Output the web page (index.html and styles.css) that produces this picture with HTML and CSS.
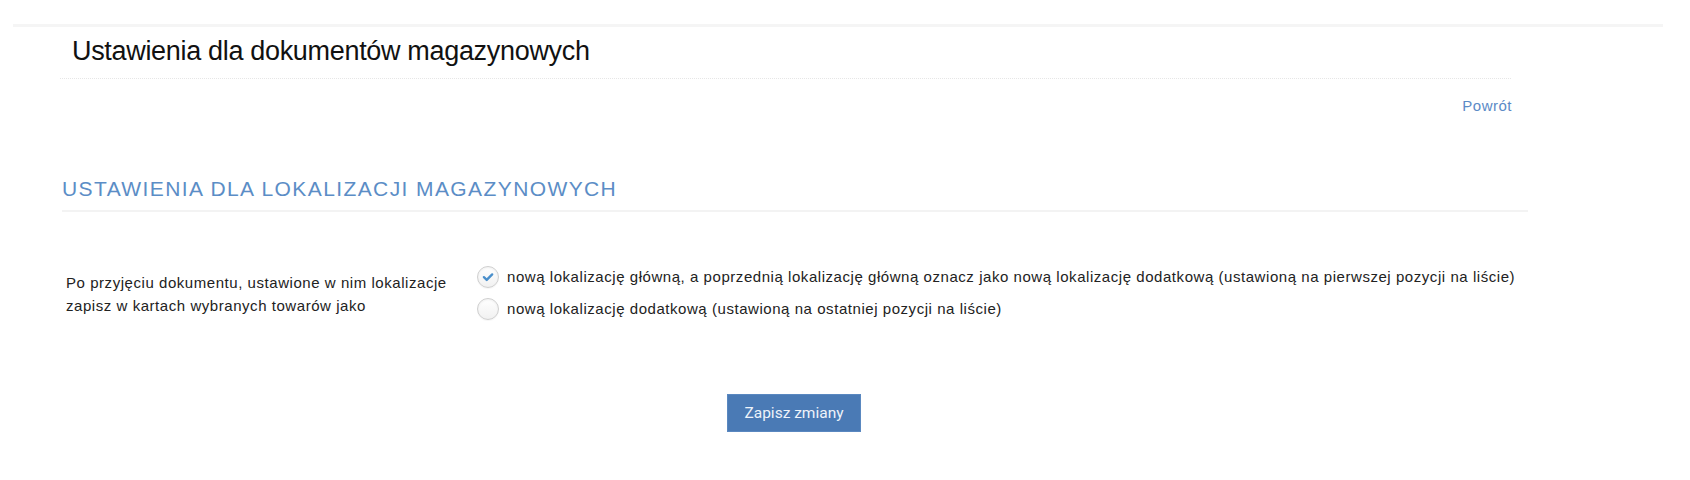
FILE: index.html
```html
<!DOCTYPE html>
<html lang="pl">
<head>
<meta charset="utf-8">
<title>Ustawienia dla dokumentów magazynowych</title>
<link rel="stylesheet" href="styles.css">
</head>
<body>
<div class="topbar"></div>
<main class="content">
  <div class="page-header">
    <h1 class="page-title">Ustawienia dla dokumentów magazynowych</h1>
  </div>
  <div class="back-row"><a class="back-link" href="#">Powrót</a></div>
  <h2 class="section-title">USTAWIENIA DLA LOKALIZACJI MAGAZYNOWYCH</h2>
  <div class="form-row">
    <div class="form-label">Po przyjęciu dokumentu, ustawione w nim lokalizacje zapisz w kartach wybranych towarów jako</div>
    <div class="form-options">
      <label class="option">
        <span class="radio checked"><svg viewBox="0 0 22 22" width="22" height="22"><path d="M6.5 11.2 L9.6 14.2 L15.6 8.2" fill="none" stroke="#4a8fcb" stroke-width="2.6" stroke-linecap="round" stroke-linejoin="round"/></svg></span>
        <span class="option-text">nową lokalizację główną, a poprzednią lokalizację główną oznacz jako nową lokalizację dodatkową (ustawioną na pierwszej pozycji na liście)</span>
      </label>
      <label class="option">
        <span class="radio"></span>
        <span class="option-text">nową lokalizację dodatkową (ustawioną na ostatniej pozycji na liście)</span>
      </label>
    </div>
  </div>
  <div class="actions">
    <button class="btn-save" type="button">Zapisz zmiany</button>
  </div>
</main>
</body>
</html>
```
FILE: styles.css
```css
html, body {
  margin: 0;
  padding: 0;
  background: #ffffff;
  font-family: "Liberation Sans", Arial, sans-serif;
  color: #222;
}
.topbar {
  margin: 24px 0 0 13px;
  width: 1650px;
  height: 3px;
  background: #f5f5f5;
}
.content {
  margin-left: 60px;
  width: 1468px;
}
.page-header {
  width: 1451px;
  border-bottom: 1px dotted #e6e6e6;
  padding: 9px 0 11px 12px;
  box-sizing: border-box;
}
.page-title {
  margin: 0;
  font-size: 27px;
  font-weight: normal;
  line-height: 31px;
  color: #111;
  letter-spacing: -0.32px;
}
.back-row {
  width: 1452px;
  display: flex;
  justify-content: flex-end;
  padding-top: 18px;
}
.back-link {
  font-size: 15px;
  line-height: 18px;
  letter-spacing: 0.5px;
  color: #5b8ac6;
  text-decoration: none;
}
.section-title {
  margin: 62px 0 0 2px;
  padding-bottom: 9px;
  border-bottom: 2px solid #f3f3f3;
  font-size: 21px;
  font-weight: normal;
  line-height: 24px;
  letter-spacing: 1.4px;
  color: #5b8dc6;
}
.form-row {
  display: flex;
  margin-top: 50px;
}
.form-label {
  width: 398px;
  padding-left: 6px;
  padding-top: 9px;
  font-size: 15px;
  line-height: 23px;
  letter-spacing: 0.55px;
  color: #222;
}
.form-options {
  margin-left: 13px;
  padding-top: 4px;
  display: flex;
  flex-direction: column;
  gap: 10px;
}
.option {
  display: flex;
  align-items: center;
  gap: 8px;
  font-size: 15px;
  line-height: 22px;
  letter-spacing: 0.55px;
  color: #222;
}
.radio {
  width: 20px;
  height: 20px;
  border: 1px solid #cfcfcf;
  border-radius: 50%;
  background: linear-gradient(#ffffff, #f1f1f1);
  box-shadow: inset 0 1px 2px rgba(0,0,0,0.06), 0 1px 1px rgba(0,0,0,0.04);
  display: flex;
  align-items: center;
  justify-content: center;
  flex: none;
}
.radio svg {
  display: block;
}
.actions {
  display: flex;
  justify-content: center;
  margin-top: 74px;
}
.btn-save {
  width: 134px;
  height: 38px;
  border: 1px solid #5a88c0;
  background: #4a7ab5;
  color: #eef3fa;
  font-family: Roboto, "Liberation Sans", sans-serif;
  font-size: 15.5px;
  letter-spacing: 0;
  cursor: pointer;
}
```
